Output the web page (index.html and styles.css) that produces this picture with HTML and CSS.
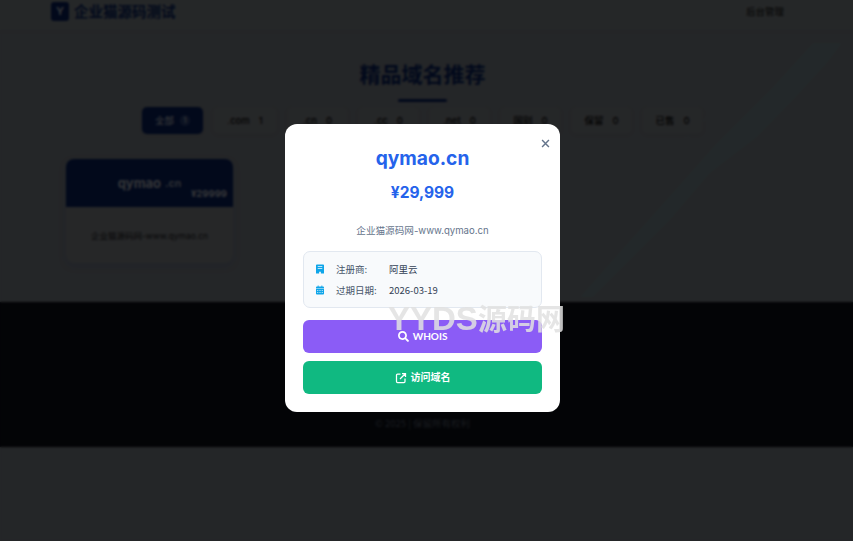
FILE: index.html
```
<!DOCTYPE html>
<html lang="zh-CN">
<head>
<meta charset="utf-8">
<title>企业猫源码测试</title>
<link rel="stylesheet" href="styles.css">
</head>
<body>
<div class="page">
  <svg class="decor" viewBox="0 0 293 280" width="293" height="280" aria-hidden="true">
    <path class="decor-band" d="M253 13L282 13L267 33L233 70L197 107L150 143L110 190L33 267L20 267L100 177L157 113L213 57Z"/>
    <path class="decor-line" d="M220 13L10 227"/>
  </svg>
  <header class="site-header">
    <div class="brand">
      <span class="brand-mark">Y</span>
      <span class="brand-name">企业猫源码测试</span>
    </div>
    <a class="admin-link">后台管理</a>
  </header>
  <main class="content">
    <h1 class="title">精品域名推荐</h1>
    <div class="title-rule"></div>
    <div class="filters">
      <button class="filter active">全部<span class="badge">1</span></button>
      <button class="filter wide">.com<span class="count">1</span></button>
      <button class="filter">.cn<span class="count">0</span></button>
      <button class="filter">.cc<span class="count">0</span></button>
      <button class="filter">.net<span class="count">0</span></button>
      <button class="filter">国别<span class="count">0</span></button>
      <button class="filter">保留<span class="count">0</span></button>
      <button class="filter">已售<span class="count">0</span></button>
    </div>
    <article class="card">
      <div class="card-head">
        <span class="card-name">qymao</span><span class="card-tld">.cn</span>
        <span class="card-price">¥29999</span>
      </div>
      <div class="card-body">企业猫源码网-www.qymao.cn</div>
    </article>
  </main>
  <footer class="site-footer">© 2025 | 保留所有权利</footer>
  <div class="page-end"></div>
</div>

<div class="overlay">
  <section class="modal">
    <button class="close" aria-label="关闭">
      <svg viewBox="0 0 10 10" width="9" height="9"><path d="M1.2 1.2l7.6 7.6M8.8 1.2L1.2 8.8"/></svg>
    </button>
    <h2 class="modal-domain">qymao.cn</h2>
    <div class="modal-price">¥29,999</div>
    <p class="modal-desc">企业猫源码网-www.qymao.cn</p>
    <div class="info">
      <div class="info-row">
        <svg class="info-icon" viewBox="0 0 448 512"><path d="M48 0C22 0 0 22 0 48v464h176v-96h96v96h176V48c0-26-22-48-48-48H48zm48 96h256v48H96V96zm0 112h256v48H96v-48z"/></svg>
        <span class="info-label">注册商:</span><span class="info-value">阿里云</span>
      </div>
      <div class="info-row">
        <svg class="info-icon" viewBox="0 0 448 512"><path d="M96 0h48v64h160V0h48v64h48c26 0 48 22 48 48v48H0v-48c0-26 22-48 48-48h48V0zM0 192h448v272c0 26-22 48-48 48H48c-26 0-48-22-48-48V192zm64 64v48h64v-48H64zm128 0v48h64v-48h-64zm128 0v48h64v-48h-64zM64 368v48h64v-48H64zm128 0v48h64v-48h-64zm128 0v48h64v-48h-64z"/></svg>
        <span class="info-label">过期日期:</span><span class="info-value">2026-03-19</span>
      </div>
    </div>
    <button class="action whois">
      <svg viewBox="0 0 512 512" width="11" height="11"><path d="M505 442.700L405.300 343c-4.500-4.500-10.600-7-17-7H372c27.600-35.300 44-79.700 44-128C416 93.100 322.900 0 208 0S0 93.100 0 208s93.100 208 208 208c48.300 0 92.700-16.400 128-44v16.300c0 6.400 2.500 12.500 7 17l99.700 99.700c9.400 9.400 24.600 9.400 33.900 0l28.300-28.300c9.400-9.400 9.400-24.600.1-34zM208 336c-70.700 0-128-57.200-128-128 0-70.700 57.200-128 128-128 70.700 0 128 57.200 128 128 0 70.700-57.200 128-128 128z"/></svg>
      WHOIS
    </button>
    <button class="action visit">
      <svg viewBox="0 0 24 24" width="12" height="12" class="stroke-icon"><path d="M11 4H5a2 2 0 0 0-2 2v13a2 2 0 0 0 2 2h13a2 2 0 0 0 2-2v-6M10 14L21 3M14 3h7v7"/></svg>
      访问域名
    </button>
  </section>
</div>
<div class="watermark"><span class="watermark-latin">YYDS</span>源码网</div>
</body>
</html>
```
FILE: styles.css
```
* { box-sizing: border-box; }
html, body { margin: 0; height: 100%; overflow: hidden; }
body {
  font-family: Inter, "Noto Sans CJK SC", sans-serif;
  background: #7a7f85;
  color: #101114;
}
button { font-family: inherit; border: 0; }
.page { position: relative; display: flex; flex-direction: column; height: 541px; }
.decor { position: absolute; top: 30px; left: 560px; }
.decor-band { fill: #76888e; }
.decor-line { stroke: #76888e; stroke-width: 1; fill: none; }
.site-header {
  position: relative;
  height: 30px;
  padding: 0 69px 8px 51px;
  background: #7e8487;
  display: flex;
  align-items: center;
  justify-content: space-between;
  box-shadow: 0 1px 4px rgba(0,0,0,.06);
}
.brand { display: flex; align-items: center; gap: 5px; }
.brand-mark {
  width: 18px; height: 19px;
  border-radius: 3px;
  background: #071f5c;
  color: #aeb2ba;
  font: 700 11px/19px Inter, sans-serif;
  text-align: center;
}
.brand-name { font-size: 14.500px; font-weight: 700; color: #071f5c; line-height: 20px; font-family: "Noto Sans CJK SC", sans-serif; }
.admin-link { font-size: 9.500px; color: #0b0b0b; line-height: 14px; font-family: "Noto Sans CJK SC", sans-serif; }
.content { position: relative; height: 272px; display: flex; flex-direction: column; align-items: center; padding: 27px 8px 0 0; }
.title { margin: 0; font-size: 21px; line-height: 32px; font-weight: 700; color: #071f5c; font-family: "Noto Sans CJK SC", sans-serif; }
.title-rule { width: 49px; height: 3px; margin-top: 10px; background: #071f5c; border-radius: 2px; }
.filters { display: flex; gap: 10px; margin-top: 5px; }
.filter {
  height: 27px; width: 61px; padding: 0;
  border-radius: 5px;
  background: #7e8286;
  box-shadow: 0 1px 3px rgba(0,0,0,.08);
  font: 500 9.500px/27px Inter, "Noto Sans CJK SC", sans-serif;
  color: #0b0b0b;
  display: flex; align-items: center; justify-content: center; gap: 9px;
}
.filter.wide { width: 64px; }
.filter.active { background: #071f5c; color: #aeb2ba; gap: 6px; }
.badge { width: 10px; height: 11px; line-height: 11px; border-radius: 5px; background: rgba(255,255,255,.15); font-size: 8px; }
.card {
  align-self: flex-start;
  margin: 25px 0 0 66px;
  width: 167px; height: 104px;
  border-radius: 8px;
  background: #808387;
  overflow: hidden;
  box-shadow: 0 3px 8px rgba(10,50,150,.12);
}
.card-head {
  height: 48px;
  background: #071f5c;
  color: #aeb2ba;
  display: flex; align-items: center; justify-content: center;
  gap: 4px;
  position: relative;
  font-family: Inter, sans-serif; font-weight: 700;
}
.card-name { font-size: 13px; }
.card-tld { font-size: 10.500px; opacity: .85; }
.card-price { position: absolute; right: 6px; bottom: 8px; font-size: 9.500px; }
.card-body { height: 56px; display: flex; align-items: center; justify-content: center; font-size: 8.500px; color: #16171a; }
.site-footer {
  position: relative;
  height: 145px;
  padding: 0 8px 17px 0;
  background: #0b0e16;
  color: #535d6b;
  font-size: 9.500px;
  font-family: "Noto Sans CJK SC", sans-serif;
  display: flex; justify-content: center; align-items: flex-end;
}
.page-end { position: relative; flex: 1; background: #7a7f85; }
.overlay {
  position: fixed; inset: 0;
  background: rgba(0,0,0,.7);
  backdrop-filter: blur(1px);
}
.modal {
  position: absolute; top: 124px; left: 285px;
  width: 275px; height: 288px;
  padding: 20px 18px;
  background: #fff;
  border-radius: 12px;
  display: flex; flex-direction: column; align-items: center;
}
.close {
  position: absolute; top: 14px; right: 10px;
  width: 10px; height: 10px; padding: 0;
  background: none;
  display: flex; align-items: center; justify-content: center;
}
.close svg path { stroke: #64748b; stroke-width: 1.6; fill: none; }
.modal-domain { margin: 0; font: 700 19.200px/28px Inter, sans-serif; color: #2563eb; }
.modal-price { margin-top: 11px; font: 700 15.500px/20px Inter, sans-serif; color: #2563eb; }
.modal-desc { margin: 20px 0 0; font-size: 9.600px; line-height: 16px; color: #64748b; }
.info {
  width: 239px; height: 57px; margin-top: 12px;
  border: 1px solid #e2e8f0; border-radius: 7px;
  background: #f8fafc;
  padding: 7px 12px;
  display: flex; flex-direction: column; gap: 2px;
  font-family: "Noto Sans CJK SC", sans-serif;
}
.info-row { display: flex; align-items: center; height: 20px; font-size: 9.500px; }
.info-icon { width: 8px; height: 10px; fill: #0ea5e9; flex: none; }
.info-label { width: 53px; margin-left: 12px; color: #475569; }
.info-value { color: #334155; }
.action {
  width: 239px; height: 33px; flex: none;
  border-radius: 6px;
  color: #fff;
  font: 700 10px/33px Lato, "Noto Sans CJK SC", sans-serif;
  display: flex; align-items: center; justify-content: center; gap: 4px;
}
.action svg { fill: #fff; }
.action .stroke-icon { fill: none; stroke: #fff; stroke-width: 2.5; }
.whois { margin-top: 12px; background: #8b5cf6; }
.visit { margin-top: 8px; background: #10b981; }
.watermark {
  position: fixed; top: 301px; left: 388px;
  font: 700 29px/36px "Liberation Sans", "Noto Sans CJK SC", sans-serif;
  color: rgba(225,225,225,.85);
  white-space: nowrap;
}
.watermark-latin { font-size: 33px; }
```
